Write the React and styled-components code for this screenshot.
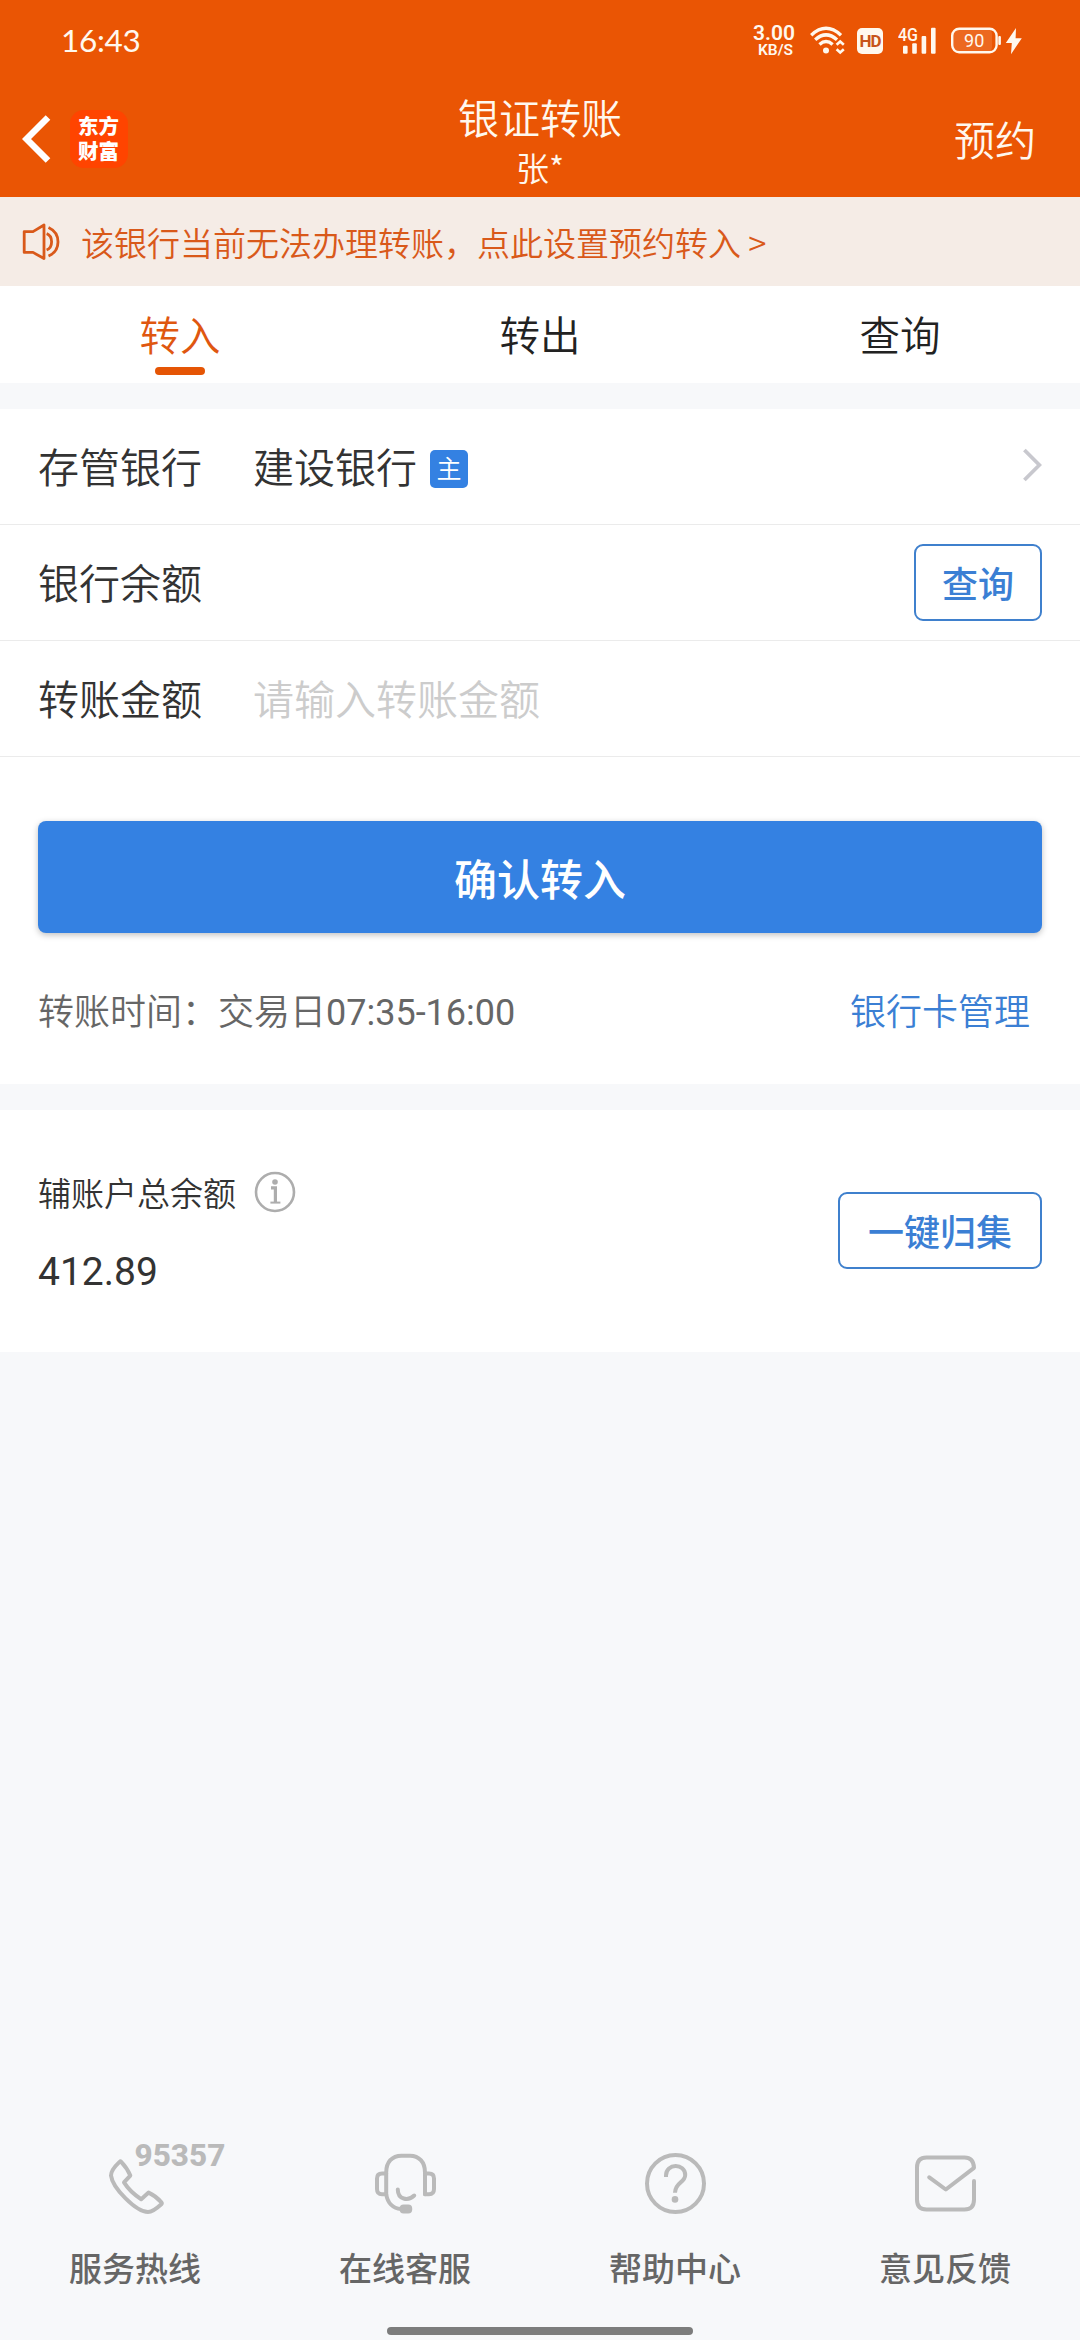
import styled, { createGlobalStyle } from "styled-components";

const cjk = `"Noto Sans CJK SC", sans-serif`;

const GlobalStyle = createGlobalStyle`
  * {
    box-sizing: border-box;
  }

  body {
    margin: 0;
    background: #f7f8fa;
    font-family: ${cjk};
    font-weight: 350;
    color: #333;
  }

  button {
    font-family: inherit;
  }

  svg {
    display: block;
    flex-shrink: 0;
  }
`;

const Page = styled.div`
  width: 1080px;
  height: 2340px;
  display: flex;
  flex-direction: column;
  overflow: hidden;
`;

const Header = styled.header`
  height: 197px;
  background: #ea5504;
  color: #fff8ee;
`;

const StatusBar = styled.div`
  height: 80px;
  padding: 0 57px 0 61px;
  display: flex;
  justify-content: space-between;
`;

const Clock = styled.span`
  padding-top: 20px;
  font-family: Lato, sans-serif;
  font-size: 31.5px;
  font-weight: 400;
  line-height: 40px;
  letter-spacing: -0.3px;
`;

const StatusIcons = styled.div`
  display: flex;
  align-items: flex-start;
  padding-top: 24px;
`;

const NetSpeed = styled.div`
  width: 44px;
  margin-right: 13px;
  display: flex;
  flex-direction: column;
  align-items: center;
  font-family: Roboto, sans-serif;
  font-weight: 600;
  font-size: 21px;
  line-height: 19px;

  small {
    margin-left: 3px;
    font-size: 15.5px;
    font-weight: 600;
    line-height: 15px;
  }
`;

const HdBadge = styled.div`
  width: 26px;
  height: 26px;
  margin: 4px 15px 0 12px;
  border-radius: 5px;
  background: #fff8ee;
  color: #c8541a;
  font-family: Roboto, sans-serif;
  font-size: 17px;
  font-weight: 700;
  line-height: 27px;
  letter-spacing: -1px;
  text-align: center;
`;

const BatterySlot = styled.div`
  margin-left: 11px;
`;

const NavBar = styled.div`
  height: 117px;
  display: grid;
  grid-template-columns: 1fr auto 1fr;
`;

const NavLeft = styled.div`
  display: flex;
  align-items: center;
  gap: 19px;
  padding: 1px 0 0 22px;
`;

const AppLogo = styled.div`
  width: 58px;
  height: 58px;
  padding: 5px 0 0 8px;
  border-radius: 14px;
  background: #ff4400;
  color: #fff;
  font-family: Roboto, ${cjk};
  font-size: 20.5px;
  font-weight: 900;
  line-height: 25px;
  white-space: nowrap;
`;

const Titles = styled.div`
  padding-top: 11px;
  text-align: center;
`;

const Title = styled.div`
  font-size: 41px;
  line-height: 50px;
`;

const SubTitle = styled.div`
  font-size: 33px;
  line-height: 52px;
`;

const NavAction = styled.div`
  justify-self: end;
  padding-right: 44px;
  font-size: 41px;
  line-height: 117px;
`;

const Notice = styled.div`
  height: 89px;
  padding-left: 22px;
  display: flex;
  align-items: center;
  gap: 20px;
  background: #f5ece6;
  color: #d9591a;
  font-size: 33px;
  line-height: 86px;
`;

const Tabs = styled.nav`
  height: 97px;
  display: grid;
  grid-template-columns: repeat(3, 1fr);
  background: #fff;
`;

const Tab = styled.div`
  height: 97px;
  padding-top: 7px;
  display: flex;
  flex-direction: column;
  align-items: center;
  font-size: 40.5px;
  line-height: 81px;
  color: ${(props) => (props.$active ? "#df5710" : "#222")};

  ${(props) =>
    props.$active &&
    `
    &::after {
      content: "";
      width: 50px;
      height: 8px;
      margin-top: -7px;
      border-radius: 4px;
      background: #e55505;
    }
  `}
`;

const Card = styled.section`
  margin-top: 26px;
  background: #fff;
`;

const FormRow = styled.div`
  height: 116px;
  padding: 0 38px 3px;
  display: flex;
  align-items: center;
  border-bottom: 1px solid #ebebeb;
  font-size: 41px;
  line-height: 60px;
`;

const RowLabel = styled.span`
  width: 215px;
`;

const RowValue = styled.div`
  flex: 1;
  display: flex;
  align-items: center;
`;

const AmountInput = styled.input`
  flex: 1;
  height: 60px;
  padding: 0;
  border: none;
  outline: none;
  background: none;
  font-family: inherit;
  font-size: 41px;
  font-weight: inherit;

  &::placeholder {
    color: #ccc;
  }
`;

const MainTag = styled.span`
  width: 38px;
  height: 38px;
  margin: 8px 0 0 13px;
  border-radius: 5px;
  background: #3481e2;
  color: #fff;
  font-size: 25px;
  line-height: 35px;
  text-align: center;
`;

const OutlineButton = styled.button`
  width: ${(props) => props.$width}px;
  height: 77px;
  padding: 0;
  border: 2px solid #3f80cd;
  border-radius: 9px;
  background: #fff;
  color: #3b7fd4;
  font-size: 36px;
  font-weight: 500;
  line-height: 71px;

  ${FormRow} & {
    margin-top: 3px;
  }
`;

const ConfirmButton = styled.button`
  display: block;
  width: 1004px;
  height: 112px;
  margin: 64px 38px 0;
  padding: 0;
  border: none;
  border-radius: 8px;
  background: #3481e2;
  box-shadow: 0 2px 6px rgba(0, 0, 0, 0.25);
  color: #fff;
  font-size: 43px;
  font-weight: 500;
  line-height: 112px;
`;

const TimeRow = styled.div`
  height: 151px;
  padding: 0 50px 0 38px;
  display: flex;
  justify-content: space-between;
  font-size: 36px;
  line-height: 152px;
  color: #666;
`;

const Hours = styled.span`
  font-family: Roboto, sans-serif;
  font-weight: 400;
`;

const CardLink = styled.a`
  color: #3b7fd4;
`;

const BalanceCard = styled(Card)`
  height: 242px;
  padding: 0 38px 2px;
  display: flex;
  align-items: center;
  justify-content: space-between;
`;

const BalanceTitle = styled.div`
  margin-top: 8px;
  display: flex;
  align-items: center;
  gap: 18px;
  font-size: 33px;
  line-height: 48px;
`;

const Balance = styled.div`
  margin-top: 28px;
  font-family: Roboto, sans-serif;
  font-size: 39px;
  font-weight: 400;
  line-height: 56px;
`;

const Footer = styled.footer`
  margin-top: auto;
  display: grid;
  grid-template-columns: repeat(4, 1fr);
`;

const FooterItem = styled.div`
  display: flex;
  flex-direction: column;
  align-items: center;
  color: #666;
  font-size: 33px;
  font-weight: 500;
  line-height: 48px;
`;

const FooterIcon = styled.div`
  position: relative;
  height: 62px;
  margin-bottom: 28px;
  color: #bababa;
`;

const HotlineNumber = styled.span`
  position: absolute;
  left: 30px;
  top: -13px;
  font-family: Roboto, sans-serif;
  font-size: 31.5px;
  font-weight: 800;
  line-height: 32px;
`;

const HomeBar = styled.div`
  width: 306px;
  height: 8px;
  margin: 36px auto 5px;
  border-radius: 4px;
  background: #7c7c7c;
`;

const WifiIcon = () => (
  <svg width="36" height="34" viewBox="-1 0 36 34" fill="none" stroke="currentColor">
    <path d="M1.2 11.2Q16 -2.6 31 11.2" strokeWidth="3.4" />
    <path d="M5.2 15.8Q16 6 27 15.8" strokeWidth="3.4" />
    <path d="M9.5 20.5Q16 14.6 22.6 20.5" strokeWidth="3.4" />
    <circle cx="16" cy="26.6" r="3" fill="currentColor" stroke="none" />
    <path d="M26.6 20.8L30.2 17.5L33.8 20.8M26.6 25.2L30.2 28.5L33.8 25.2" strokeWidth="2.6" />
  </svg>
);

const SignalIcon = () => (
  <svg width="40" height="32" viewBox="0 0 40 32" fill="currentColor">
    <text x="0" y="17" fontFamily="Roboto" fontSize="17.5" fontWeight="500" textLength="20" lengthAdjust="spacingAndGlyphs">
      4G
    </text>
    <rect x="5" y="21.7" width="4.6" height="8" rx="1" />
    <rect x="14.2" y="19.3" width="4.6" height="10.4" rx="1" />
    <rect x="23.6" y="12" width="4.6" height="17.7" rx="1" />
    <rect x="33" y="3.7" width="4.6" height="26" rx="1" />
  </svg>
);

const BatteryIcon = () => (
  <svg width="74" height="32" viewBox="0 0 74 32" fill="currentColor">
    <rect x="4" y="5" width="39" height="23" rx="5" opacity="0.12" />
    <rect x="3.2" y="4.7" width="44.4" height="23.6" rx="7" fill="none" stroke="currentColor" strokeWidth="2.4" />
    <rect x="49.3" y="12" width="2.6" height="9" rx="1" />
    <text x="25.2" y="22.5" fontFamily="Roboto" fontSize="18" fontWeight="400" textAnchor="middle">
      90
    </text>
    <path d="M67 4L56.8 19H62.8L62 30.2L72.8 14.2H66.6Z" />
  </svg>
);

const BackIcon = () => (
  <svg width="29" height="48" viewBox="0 0 29 48" fill="none" stroke="#fff" strokeWidth="6.5">
    <path d="M26 2.5L4.5 24L26 45.5" />
  </svg>
);

const SpeakerIcon = () => (
  <svg width="39" height="38" viewBox="0 0 39 38" fill="none" stroke="currentColor" strokeWidth="2.8">
    <path d="M2.2 8.6H11L22 2V35.5L11 29.4H2.2Z" strokeLinejoin="round" />
    <path d="M24.6 10.6Q29.6 12.5 29.6 18.8T24.6 27" />
    <path d="M26.5 4.6Q36 9 36 19T26.5 33" />
  </svg>
);

const ArrowIcon = () => (
  <svg width="20" height="34" viewBox="0 0 20 34" fill="none" stroke="#c8c8ce" strokeWidth="3.8">
    <path d="M2.4 2L17.4 17L2.4 32" />
  </svg>
);

const InfoIcon = () => (
  <svg width="42" height="42" viewBox="0 0 42 42" fill="none" stroke="#adadad">
    <circle cx="21" cy="21" r="19" strokeWidth="2.6" />
    <circle cx="21" cy="11" r="2.8" fill="#adadad" stroke="none" />
    <path d="M17 16.8H21.4V31" strokeWidth="3.2" />
    <path d="M16.4 31.6H26.4" strokeWidth="2" />
  </svg>
);

const LineIcon = ({ children }) => (
  <svg
    width="61"
    height="62"
    viewBox="0 0 61 62"
    fill="none"
    stroke="currentColor"
    strokeWidth="4"
    strokeLinecap="round"
    strokeLinejoin="round"
  >
    {children}
  </svg>
);

const footerItems = [
  {
    label: "服务热线",
    number: "95357",
    icon: (
      <path d="M14.8 8.6Q5.9 17 6 22.5C7.5 35 31 59 43 59Q48 59 56.3 51.3Q57.4 50.2 56.3 49.2Q51 43 43.6 39.6L36.2 46.2Q25 39 19 29.4L25.3 22.6Q22.5 15.5 16 8.6Q15.4 8 14.8 8.6Z" />
    ),
  },
  {
    label: "在线客服",
    icon: (
      <>
        <path d="M50 41.2V19.5C50 9 44 2.7 35 2.7H26.5C17 2.7 11.2 9 11.2 19.5V41C12.5 50 18 55.5 26 56" />
        <path d="M11.2 20.5H7Q2 20.5 2 25.5V36Q2 41.2 7 41.2H11.2" />
        <path d="M50 20.5H54Q59 20.5 59 25.5V36Q59 41.2 54 41.2H50" />
        <path d="M22.8 36.5C22.8 46.5 33 48.5 39.2 42.5" />
        <rect x="24.6" y="51.5" width="12.6" height="9" rx="4" fill="currentColor" stroke="none" />
      </>
    ),
  },
  {
    label: "帮助中心",
    icon: (
      <>
        <circle cx="30.5" cy="30.5" r="28.5" />
        <path d="M21 24V22.5C21 10 40.2 10 40.2 22C40.2 30 30 29 30 39.8" strokeLinecap="butt" />
        <circle cx="30" cy="46.4" r="3.3" fill="currentColor" stroke="none" />
      </>
    ),
  },
  {
    label: "意见反馈",
    icon: (
      <path d="M59 28V46.5Q59 56.5 49.5 56.5H11.5Q2 56.5 2 46.5V14.5Q2 4.5 11.5 4.5H49.5Q58.5 4.5 59 14.8L30.8 36.5L14.3 24.3" />
    ),
  },
];

function App() {
  return (
    <Page>
      <GlobalStyle />
      <Header>
        <StatusBar>
          <Clock>16:43</Clock>
          <StatusIcons>
            <NetSpeed>
              3.00
              <small>KB/S</small>
            </NetSpeed>
            <WifiIcon />
            <HdBadge>HD</HdBadge>
            <SignalIcon />
            <BatterySlot>
              <BatteryIcon />
            </BatterySlot>
          </StatusIcons>
        </StatusBar>
        <NavBar>
          <NavLeft>
            <BackIcon />
            <AppLogo>
              东方
              <br />
              财富
            </AppLogo>
          </NavLeft>
          <Titles>
            <Title>银证转账</Title>
            <SubTitle>张*</SubTitle>
          </Titles>
          <NavAction>预约</NavAction>
        </NavBar>
      </Header>

      <Notice>
        <SpeakerIcon />
        该银行当前无法办理转账，点此设置预约转入 &gt;
      </Notice>

      <Tabs>
        <Tab $active>转入</Tab>
        <Tab>转出</Tab>
        <Tab>查询</Tab>
      </Tabs>

      <Card>
        <FormRow>
          <RowLabel>存管银行</RowLabel>
          <RowValue>
            建设银行
            <MainTag>主</MainTag>
          </RowValue>
          <ArrowIcon />
        </FormRow>
        <FormRow>
          <RowLabel>银行余额</RowLabel>
          <RowValue />
          <OutlineButton $width={128}>查询</OutlineButton>
        </FormRow>
        <FormRow>
          <RowLabel>转账金额</RowLabel>
          <AmountInput placeholder="请输入转账金额" />
        </FormRow>
        <ConfirmButton>确认转入</ConfirmButton>
        <TimeRow>
          <span>
            转账时间：交易日<Hours>07:35-16:00</Hours>
          </span>
          <CardLink>银行卡管理</CardLink>
        </TimeRow>
      </Card>

      <BalanceCard>
        <div>
          <BalanceTitle>
            辅账户总余额
            <InfoIcon />
          </BalanceTitle>
          <Balance>412.89</Balance>
        </div>
        <OutlineButton $width={204}>一键归集</OutlineButton>
      </BalanceCard>

      <Footer>
        {footerItems.map(({ label, number, icon }) => (
          <FooterItem key={label}>
            <FooterIcon>
              <LineIcon>{icon}</LineIcon>
              {number && <HotlineNumber>{number}</HotlineNumber>}
            </FooterIcon>
            {label}
          </FooterItem>
        ))}
      </Footer>
      <HomeBar />
    </Page>
  );
}

export default App;
